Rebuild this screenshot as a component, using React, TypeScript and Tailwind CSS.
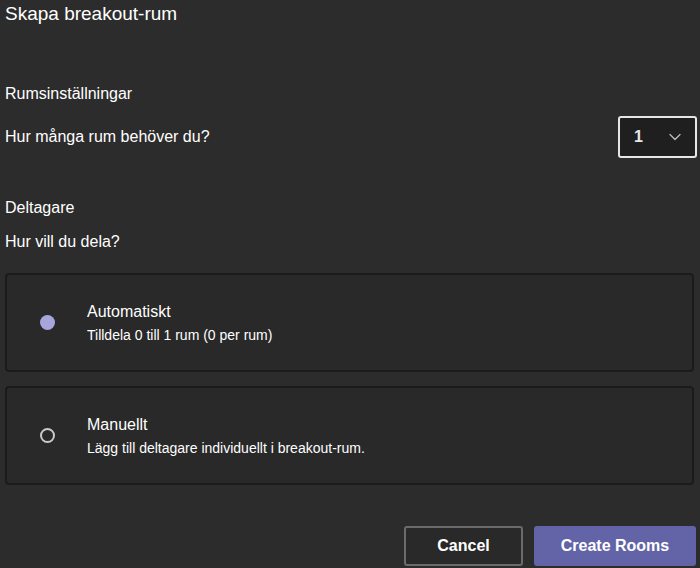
import { ChevronDown } from 'lucide-react'

const font = { fontFamily: '"Liberation Sans", Arial, sans-serif' }

function OptionCard({
  selected,
  title,
  subtitle,
}: {
  selected: boolean
  title: string
  subtitle: string
}) {
  return (
    <div className="h-[99px] rounded-[4px] border-2 border-[#1b1b1b] bg-[#292929] flex items-center pl-[33px]">
      {selected ? (
        <span className="w-[15px] h-[15px] rounded-full bg-[#a6a6dd] shrink-0" />
      ) : (
        <span className="w-[15px] h-[15px] rounded-full border-2 border-[#c9c9c9] shrink-0" />
      )}
      <div className="ml-[32px] flex flex-col">
        <span className="text-[16px] leading-[20px] text-white">{title}</span>
        <span className="text-[14px] leading-[16px] text-white mt-[5px]">{subtitle}</span>
      </div>
    </div>
  )
}

export default function App() {
  return (
    <div className="w-[700px] h-[568px] bg-[#2d2c2c] text-white overflow-hidden px-[5px]" style={font}>
      <h1 className="text-[19px] leading-[22px] pt-[3px]">Skapa breakout-rum</h1>

      <div className="mt-[59px] text-[16px] leading-[20px]">Rumsinställningar</div>
      <div className="flex items-center justify-between mt-[12px]">
        <span className="text-[16px] leading-[20px]">Hur många rum behöver du?</span>
        <div className="w-[79px] h-[42px] mr-[-2px] rounded-[3px] border-2 border-[#e6e6e6] bg-[#1f1f1f] flex items-center justify-between pl-[14px] pr-[10px]">
          <span className="text-[16px] font-bold text-[#e8e8e8]">1</span>
          <ChevronDown className="w-[20px] h-[20px] text-[#bdbdbd]" strokeWidth={1.5} />
        </div>
      </div>

      <div className="mt-[40px] text-[16px] leading-[20px]">Deltagare</div>
      <div className="mt-[14px] text-[16px] leading-[20px]">Hur vill du dela?</div>

      <div className="mt-[21px] flex flex-col gap-[14px] mr-[1px]">
        <OptionCard selected title="Automatiskt" subtitle="Tilldela 0 till 1 rum (0 per rum)" />
        <OptionCard
          selected={false}
          title="Manuellt"
          subtitle="Lägg till deltagare individuellt i breakout-rum."
        />
      </div>

      <div className="flex justify-end gap-[11px] mt-[41px] mr-[-1px]">
        <button className="w-[119px] h-[40px] rounded-[3px] border-2 border-[#6b6b6b] bg-[#292929] text-[16px] font-bold text-white">
          Cancel
        </button>
        <button className="w-[162px] h-[40px] rounded-[3px] bg-[#6264a7] text-[16px] font-bold text-white">
          Create Rooms
        </button>
      </div>
    </div>
  )
}
